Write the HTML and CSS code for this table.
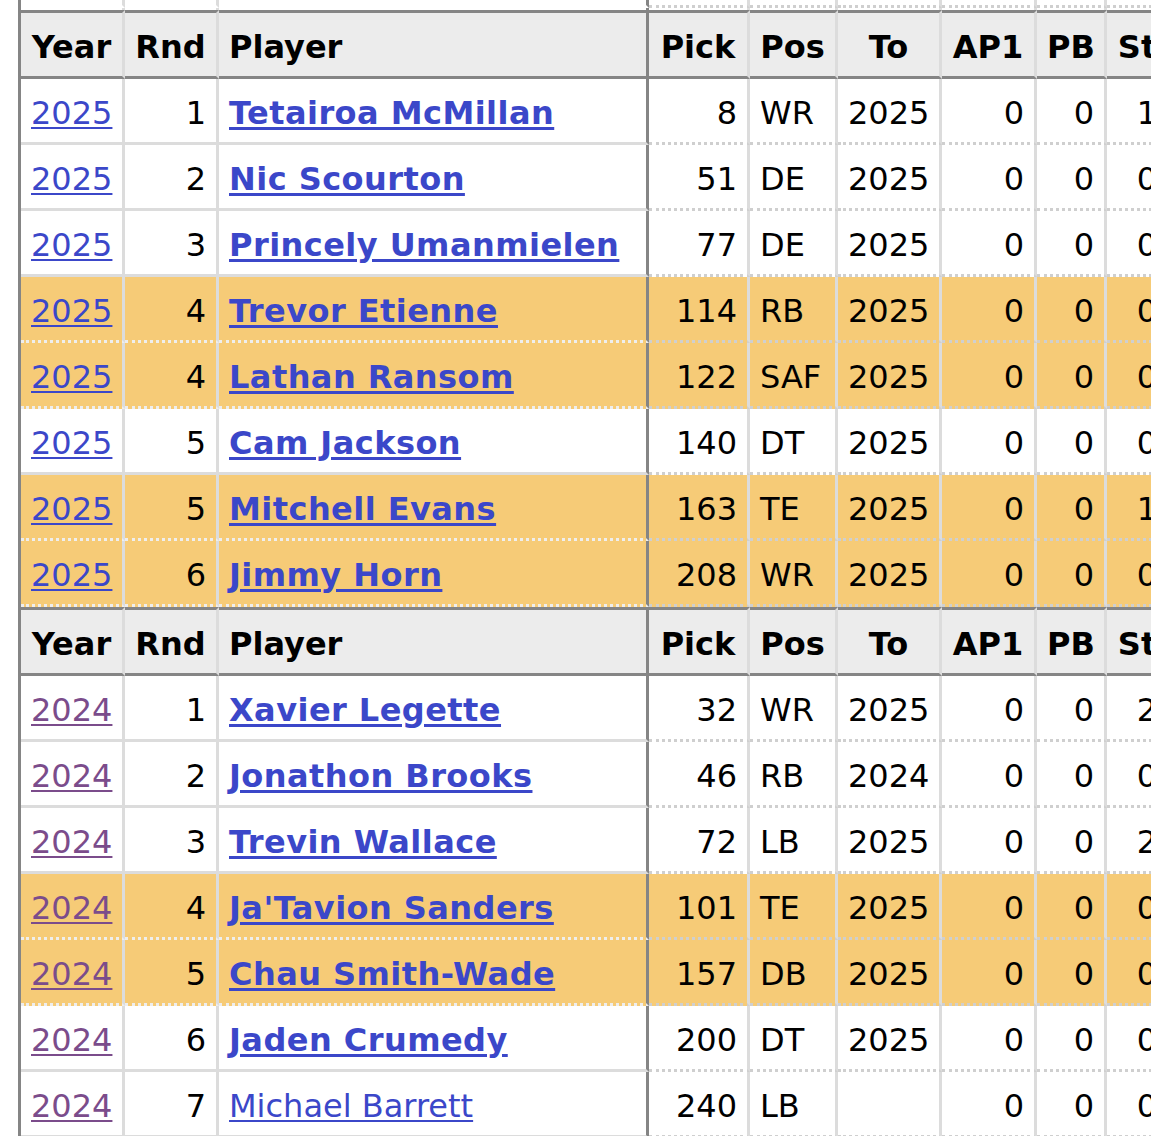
FILE: index.html
```html
<!DOCTYPE html>
<html>
<head>
<meta charset="utf-8">
<link rel="stylesheet" href="styles.css">
</head>
<body>
<div class="wrap">
<table class="draft">
<colgroup>
<col class="c-year"><col class="c-rnd"><col class="c-player"><col class="c-pick"><col class="c-pos"><col class="c-to"><col class="c-ap"><col class="c-pb"><col class="c-st">
</colgroup>
<tbody>
<tr class="partial"><td class="fz"></td><td class="fz"></td><td class="fz sep"></td><td></td><td></td><td></td><td></td><td></td><td></td></tr>
<tr class="gap"><td></td><td></td><td class="sep"></td><td></td><td></td><td></td><td></td><td></td><td></td></tr>
<tr class="head"><th>Year</th><th>Rnd</th><th class="left sep">Player</th><th>Pick</th><th>Pos</th><th>To</th><th>AP1</th><th>PB</th><th>St</th></tr>
<tr><td class="fz"><a href="#">2025</a></td><td class="fz num">1</td><td class="fz sep"><a class="b" href="#">Tetairoa McMillan</a></td><td class="num">8</td><td>WR</td><td>2025</td><td class="num">0</td><td class="num">0</td><td class="num">1</td></tr>
<tr><td class="fz"><a href="#">2025</a></td><td class="fz num">2</td><td class="fz sep"><a class="b" href="#">Nic Scourton</a></td><td class="num">51</td><td>DE</td><td>2025</td><td class="num">0</td><td class="num">0</td><td class="num">0</td></tr>
<tr><td class="fz"><a href="#">2025</a></td><td class="fz num">3</td><td class="fz sep"><a class="b" href="#">Princely Umanmielen</a></td><td class="num">77</td><td>DE</td><td>2025</td><td class="num">0</td><td class="num">0</td><td class="num">0</td></tr>
<tr class="hl"><td class="fz"><a href="#">2025</a></td><td class="fz num">4</td><td class="fz sep"><a class="b" href="#">Trevor Etienne</a></td><td class="num">114</td><td>RB</td><td>2025</td><td class="num">0</td><td class="num">0</td><td class="num">0</td></tr>
<tr class="hl"><td class="fz"><a href="#">2025</a></td><td class="fz num">4</td><td class="fz sep"><a class="b" href="#">Lathan Ransom</a></td><td class="num">122</td><td>SAF</td><td>2025</td><td class="num">0</td><td class="num">0</td><td class="num">0</td></tr>
<tr><td class="fz"><a href="#">2025</a></td><td class="fz num">5</td><td class="fz sep"><a class="b" href="#">Cam Jackson</a></td><td class="num">140</td><td>DT</td><td>2025</td><td class="num">0</td><td class="num">0</td><td class="num">0</td></tr>
<tr class="hl"><td class="fz"><a href="#">2025</a></td><td class="fz num">5</td><td class="fz sep"><a class="b" href="#">Mitchell Evans</a></td><td class="num">163</td><td>TE</td><td>2025</td><td class="num">0</td><td class="num">0</td><td class="num">1</td></tr>
<tr class="hl"><td class="fz"><a href="#">2025</a></td><td class="fz num">6</td><td class="fz sep"><a class="b" href="#">Jimmy Horn</a></td><td class="num">208</td><td>WR</td><td>2025</td><td class="num">0</td><td class="num">0</td><td class="num">0</td></tr>
<tr class="head"><th>Year</th><th>Rnd</th><th class="left sep">Player</th><th>Pick</th><th>Pos</th><th>To</th><th>AP1</th><th>PB</th><th>St</th></tr>
<tr><td class="fz"><a class="v" href="#">2024</a></td><td class="fz num">1</td><td class="fz sep"><a class="b" href="#">Xavier Legette</a></td><td class="num">32</td><td>WR</td><td>2025</td><td class="num">0</td><td class="num">0</td><td class="num">2</td></tr>
<tr><td class="fz"><a class="v" href="#">2024</a></td><td class="fz num">2</td><td class="fz sep"><a class="b" href="#">Jonathon Brooks</a></td><td class="num">46</td><td>RB</td><td>2024</td><td class="num">0</td><td class="num">0</td><td class="num">0</td></tr>
<tr><td class="fz"><a class="v" href="#">2024</a></td><td class="fz num">3</td><td class="fz sep"><a class="b" href="#">Trevin Wallace</a></td><td class="num">72</td><td>LB</td><td>2025</td><td class="num">0</td><td class="num">0</td><td class="num">2</td></tr>
<tr class="hl"><td class="fz"><a class="v" href="#">2024</a></td><td class="fz num">4</td><td class="fz sep"><a class="b" href="#">Ja'Tavion Sanders</a></td><td class="num">101</td><td>TE</td><td>2025</td><td class="num">0</td><td class="num">0</td><td class="num">0</td></tr>
<tr class="hl"><td class="fz"><a class="v" href="#">2024</a></td><td class="fz num">5</td><td class="fz sep"><a class="b" href="#">Chau Smith-Wade</a></td><td class="num">157</td><td>DB</td><td>2025</td><td class="num">0</td><td class="num">0</td><td class="num">0</td></tr>
<tr><td class="fz"><a class="v" href="#">2024</a></td><td class="fz num">6</td><td class="fz sep"><a class="b" href="#">Jaden Crumedy</a></td><td class="num">200</td><td>DT</td><td>2025</td><td class="num">0</td><td class="num">0</td><td class="num">0</td></tr>
<tr><td class="fz"><a class="v" href="#">2024</a></td><td class="fz num">7</td><td class="fz sep"><a href="#">Michael Barrett</a></td><td class="num">240</td><td>LB</td><td></td><td class="num">0</td><td class="num">0</td><td class="num">0</td></tr>
</tbody>
</table>
</div>
</body>
</html>
```

FILE: styles.css
```css
html, body {
  margin: 0;
  padding: 0;
  background: #ffffff;
}

body {
  font-family: "DejaVu Sans", Verdana, sans-serif;
  font-size: 32px;
  color: #000;
}

.wrap {
  margin-left: 18px;
  width: 1133px;
  height: 1136px;
  overflow: hidden;
}

.draft {
  border-collapse: separate;
  border-spacing: 0;
  table-layout: fixed;
  width: 1152px;
  border-left: 3px solid #858585;
}

.c-year { width: 104px; }
.c-rnd { width: 94px; }
.c-player { width: 430px; }
.c-pick { width: 101px; }
.c-pos { width: 88px; }
.c-to { width: 104px; }
.c-ap { width: 95px; }
.c-pb { width: 70px; }
.c-st { width: 63px; }

.draft td,
.draft th {
  box-sizing: border-box;
  padding: 4px 10px 0 10px;
  height: 66px;
  vertical-align: middle;
  white-space: nowrap;
  overflow: hidden;
  text-align: left;
  border-right: 3px solid #dcdcdc;
  border-bottom: 3px dotted #cfcfcf;
  line-height: 1;
}

.draft td.fz {
  border-bottom: 3px solid #dcdcdc;
}

.draft tr.hl td {
  background: #f6cb77;
}

.draft tr.hl td.fz {
  border-bottom: 3px dotted #eeeeee;
}

.draft td.num {
  text-align: right;
}

.draft .sep,
.draft td.sep,
.draft th.sep {
  border-right-color: #858585;
}

.draft tr.partial td {
  height: 8px;
  padding: 0;
}

.draft tr.partial td.fz {
  border-bottom: 3px solid #ffffff;
}

.draft tr.gap td {
  height: 2px;
  padding: 0;
  border-bottom: 0;
}

.draft tr.head th {
  height: 69px;
  background: #ececec;
  font-weight: bold;
  text-align: center;
  border-top: 3px solid #858585;
  border-bottom: 3px solid #858585;
}

.draft tr.head th.left {
  text-align: left;
}

.draft a {
  color: #3b47c9;
  text-decoration: underline;
  text-decoration-thickness: 2px;
  text-underline-offset: 3px;
}

.draft a.b {
  font-weight: bold;
  letter-spacing: 0.45px;
  text-decoration-thickness: 3px;
}

.draft a.v {
  color: #7b4c8b;
}
```
